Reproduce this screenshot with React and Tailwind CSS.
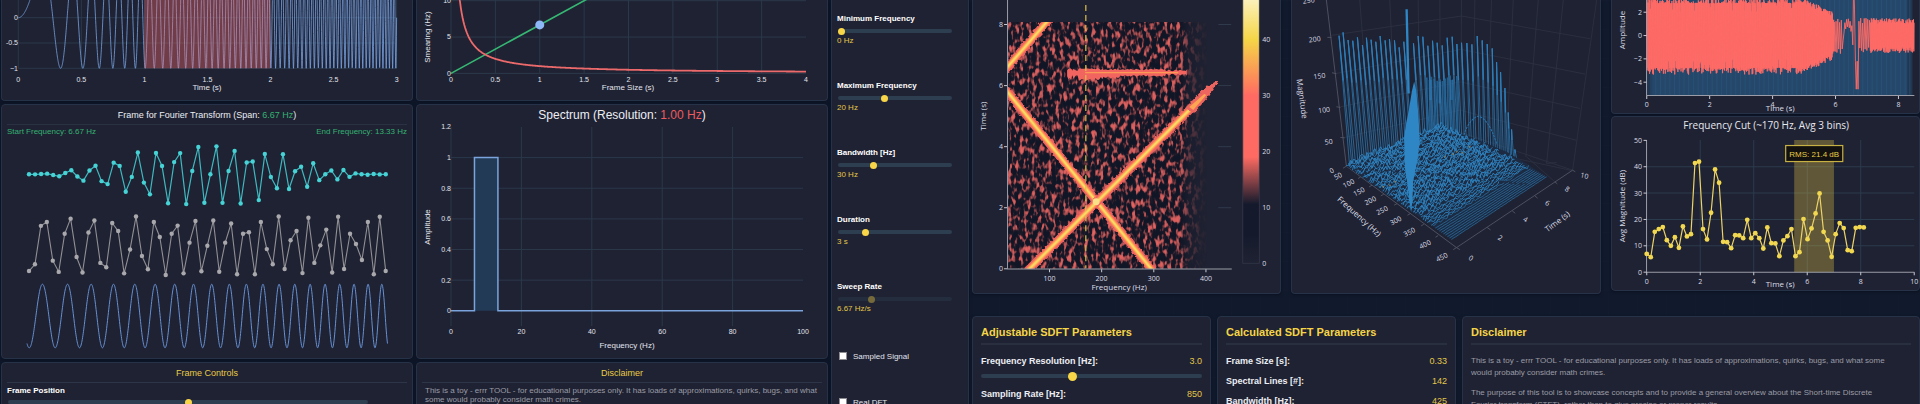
import React from 'react';

const TAU = Math.PI * 2;

function makeRandom(seed) {
  let s = seed;
  return () => {
    s = (s * 1664525 + 1013904223) % 4294967296;
    return s / 4294967296;
  };
}

const toPoints = (pts) => pts.map(([x, y]) => `${x.toFixed(2)},${y.toFixed(2)}`).join(' ');
const chirp = (t) => Math.sin(TAU * (20 / 3) * t * t);

const ARIAL = "font-['Liberation_Sans',Arial,sans-serif]";
const OPEN = "font-['Open_Sans','Noto_Sans',sans-serif]";

function Panel({ className = '', children }) {
  return (
    <section className={`border border-[#263247] bg-[#1f2232] shadow-[0_1px_3px_#0a1120] ${className}`}>
      {children}
    </section>
  );
}

/* ---------- Left page charts ---------- */

function SignalChart() {
  const px = (t) => 18.3 + 126.1 * t;
  const py = (v) => 17.7 - 50.6 * v;
  const pts = [];
  for (let t = 0; t <= 3.0001; t += 0.0015) pts.push([px(t), py(chirp(t))]);
  return (
    <svg viewBox="2 0 410 100" className={`block h-auto w-full ${ARIAL}`} role="img" aria-label="Signal over time">
      <g stroke="#2f4255" strokeWidth="1" opacity="0.7">
        {[0, -0.5, -1].map((v) => (
          <line key={v} x1={px(0)} x2={px(3)} y1={py(v)} y2={py(v)} />
        ))}
        {[0, 0.5, 1, 1.5, 2, 2.5, 3].map((t) => (
          <line key={t} x1={px(t)} x2={px(t)} y1="0" y2={py(-1)} />
        ))}
      </g>
      <polyline points={toPoints(pts)} fill="none" stroke="#7aa7e8" strokeWidth="0.9" opacity="0.85" />
      <rect x={px(1)} y="0" width={px(2) - px(1)} height={py(-1)} fill="#ff6b6b" opacity="0.36" />
      <g fill="#e2e4ee" fontSize="7" textAnchor="end">
        <text x="18" y="20">0</text>
        <text x="18" y="45">-0.5</text>
        <text x="18" y="71">−1</text>
      </g>
      <g fill="#e2e4ee" fontSize="7" textAnchor="middle">
        {[0, 0.5, 1, 1.5, 2, 2.5, 3].map((t) => (
          <text key={t} x={px(t)} y="82">{t}</text>
        ))}
        <text x="207" y="90" fontSize="8">Time (s)</text>
      </g>
    </svg>
  );
}

function FrameChart() {
  const windowed = [];
  const sampled = [];
  const wave = [];
  for (let n = 0; n < 60; n++) {
    const w = Math.sin((Math.PI * n) / 59) ** 2;
    windowed.push([29 + 6.047 * n, 174.3 - 32.7 * w * chirp(1 + n / 60)]);
  }
  for (let n = 0; n <= 60; n++) sampled.push([29 + 5.945 * n, 245.7 - 29.3 * chirp(1 + n / 60)]);
  for (let i = 0; i <= 1200; i++) wave.push([27 + 0.3004 * i, 316 - 31.8 * chirp(1 + i / 1200)]);
  return (
    <svg viewBox="2 138 410 220" className="block h-auto w-full" role="img" aria-label="Windowed, sampled and continuous frame">
      <polyline points={toPoints(windowed)} fill="none" stroke="#3fb9c0" strokeWidth="1.2" />
      {windowed.map(([x, y], i) => <circle key={i} cx={x} cy={y} r="2.2" fill="#46d3d6" />)}
      <polyline points={toPoints(sampled)} fill="none" stroke="#909094" strokeWidth="1.1" />
      {sampled.map(([x, y], i) => <circle key={i} cx={x} cy={y} r="2.2" fill="#a9a9ad" />)}
      <polyline points={toPoints(wave)} fill="none" stroke="#6690d4" strokeWidth="1" />
    </svg>
  );
}

function SmearingChart() {
  const px = (v) => 451 + 88.75 * v;
  const py = (v) => 73.4 - 7.27 * v;
  const curve = [];
  for (let v = 0.08; v <= 4; v += 0.01) curve.push([px(v), py(1 / v)]);
  const ticks = [0, 0.5, 1, 1.5, 2, 2.5, 3, 3.5, 4];
  return (
    <svg viewBox="417 0 410 100" className={`block h-auto w-full ${ARIAL}`} role="img" aria-label="Smearing against frame size">
      <g stroke="#2f4255" strokeWidth="1" opacity="0.7">
        {[0, 5, 10].map((v) => <line key={v} x1={px(0)} x2={px(4)} y1={py(v)} y2={py(v)} />)}
        {ticks.slice(0, 8).map((v) => <line key={v} x1={px(v)} x2={px(v)} y1="0" y2={py(0)} />)}
      </g>
      <line x1={px(0)} y1={py(0)} x2={px(1.6)} y2={py(10.667)} stroke="#36b874" strokeWidth="1.6" />
      <polyline points={toPoints(curve)} fill="none" stroke="#ec6a6b" strokeWidth="1.8" />
      <circle cx={px(1)} cy={py(6.667)} r="4.5" fill="#8cb8f8" />
      <g fill="#e2e4ee" fontSize="7" textAnchor="end">
        <text x="451" y="3">10</text>
        <text x="451" y="39">5</text>
        <text x="451" y="76">0</text>
      </g>
      <g fill="#e2e4ee" fontSize="7" textAnchor="middle">
        {ticks.map((v) => <text key={v} x={px(v)} y="82">{v}</text>)}
        <text x="628" y="90" fontSize="8">Frame Size (s)</text>
        <text transform="translate(430 37) rotate(-90)" fontSize="8">Smearing (Hz)</text>
      </g>
    </svg>
  );
}

function SpectrumChart() {
  const px = (v) => 451 + 3.52 * v;
  const py = (v) => 310.8 - 153.2 * v;
  return (
    <svg viewBox="417 122 410 236" className={`block h-auto w-full ${ARIAL}`} role="img" aria-label="Spectrum">
      <g stroke="#2f4255" strokeWidth="1" opacity="0.7">
        {[0.2, 0.4, 0.6, 0.8, 1].map((v) => <line key={v} x1={px(0)} x2={px(100)} y1={py(v)} y2={py(v)} />)}
        {[0, 20, 40, 60, 80].map((v) => <line key={v} x1={px(v)} x2={px(v)} y1="127" y2="326" />)}
      </g>
      <rect x={px(6.667)} y={py(1)} width={px(6.667) - px(0)} height={py(0) - py(1)} fill="#223a56" />
      <polyline
        points={toPoints([[px(0), py(0)], [px(6.667), py(0)], [px(6.667), py(1)], [px(13.33), py(1)], [px(13.33), py(0)], [px(100), py(0)]])}
        fill="none"
        stroke="#7ba3dc"
        strokeWidth="1.5"
      />
      <g fill="#e2e4ee" fontSize="7" textAnchor="end">
        {[0, 0.2, 0.4, 0.6, 0.8, 1, 1.2].map((v) => <text key={v} x="451" y={py(v) + 2.5}>{v}</text>)}
      </g>
      <g fill="#e2e4ee" fontSize="7" textAnchor="middle">
        {[0, 20, 40, 60, 80, 100].map((v) => <text key={v} x={px(v)} y="334">{v}</text>)}
        <text x="627" y="348" fontSize="8">Frequency (Hz)</text>
        <text transform="translate(430 227) rotate(-90)" fontSize="8">Amplitude</text>
      </g>
    </svg>
  );
}

/* ---------- Right page charts ---------- */

function Sweep({ from, to }) {
  const line = { x1: from[0], y1: from[1], x2: to[0], y2: to[1] };
  return (
    <g>
      <line {...line} stroke="#ee6460" strokeWidth="8.6" filter="url(#ragged)" />
      <line {...line} stroke="#ff7d5c" strokeWidth="5.6" />
      <line {...line} stroke="#fba452" strokeWidth="4" />
      <line {...line} stroke="#f8cf5a" strokeWidth="2.4" />
      <line {...line} stroke="#fae07c" strokeWidth="0.8" />
    </g>
  );
}

function Spectrogram() {
  const fx = (f) => 997.3 + 0.521 * f;
  const ty = (t) => 268.5 - 30.5 * t;
  const rnd = makeRandom(7);
  const top = [];
  const bottom = [];
  for (let x = 1067; x <= 1187; x += 1.3) {
    const wide = x < 1078 ? 1.5 + rnd() * 3 : x < 1100 ? 3.4 + rnd() * 1.5 : x > 1165 ? 1 + rnd() * 2.4 : 2.4 + rnd() * 1.8;
    top.push([x, 72 - wide * 0.8]);
    bottom.unshift([x, 72.5 + wide * (x < 1120 ? 1.6 : 1)]);
  }
  return (
    <svg viewBox="973 0 307 293" className={`block h-auto w-full ${OPEN}`} role="img" aria-label="Spectrogram">
      <defs>
        <filter id="speckle" x="0" y="0" width="1" height="1" colorInterpolationFilters="sRGB">
          <feTurbulence type="fractalNoise" baseFrequency="0.25 0.13" numOctaves="2" seed="12" />
          <feColorMatrix values="1 0 0 0 0  1 0 0 0 0  1 0 0 0 0  0 0 0 0 1" />
          <feComponentTransfer>
            <feFuncR type="table" tableValues="0.07 0.07 0.07 0.07 0.07 0.12 0.52 0.8 0.88 0.92 1" />
            <feFuncG type="table" tableValues="0.09 0.09 0.09 0.09 0.09 0.1 0.25 0.36 0.38 0.4 0.42" />
            <feFuncB type="table" tableValues="0.15 0.15 0.15 0.15 0.15 0.16 0.27 0.36 0.37 0.38 0.4" />
          </feComponentTransfer>
        </filter>
        <filter id="ragged" x="-0.1" y="-0.1" width="1.2" height="1.2">
          <feTurbulence type="fractalNoise" baseFrequency="0.35" numOctaves="1" seed="4" result="n" />
          <feDisplacementMap in="SourceGraphic" in2="n" scale="4" xChannelSelector="R" yChannelSelector="G" />
        </filter>
        <linearGradient id="fade" x1="0" x2="1" y1="0" y2="0">
          <stop offset="0" stopColor="#fff" />
          <stop offset="0.82" stopColor="#fff" />
          <stop offset="0.86" stopColor="#666" />
          <stop offset="0.91" stopColor="#222" />
          <stop offset="0.95" stopColor="#000" />
        </linearGradient>
        <mask id="fadeMask" maskUnits="userSpaceOnUse" x="1007" y="22" width="212" height="247">
          <rect x="1007.7" y="22" width="210" height="246.5" fill="url(#fade)" />
        </mask>
        <clipPath id="heat"><rect x="1007.7" y="22" width="211" height="246.5" /></clipPath>
        <linearGradient id="scale" x1="0" x2="0" y1="-16" y2="262.5" gradientUnits="userSpaceOnUse">
          <stop offset="0" stopColor="#fffbe8" />
          <stop offset="0.2" stopColor="#f5d547" />
          <stop offset="0.4" stopColor="#ff6b62" />
          <stop offset="0.62" stopColor="#ff6b62" />
          <stop offset="0.79" stopColor="#141a2c" />
          <stop offset="0.9" stopColor="#141a2c" />
          <stop offset="1" stopColor="#1f2232" />
        </linearGradient>
      </defs>
      <g stroke="#2f3a4c" strokeWidth="1">
        {[2, 4, 6, 8].map((t) => <line key={t} x1="1218" x2="1231" y1={ty(t)} y2={ty(t)} />)}
      </g>
      <g mask="url(#fadeMask)">
        <rect x="1007.7" y="22" width="210" height="246.5" filter="url(#speckle)" />
      </g>
      <g clipPath="url(#heat)">
        <Sweep from={[1004, 87.5]} to={[1153, 271]} />
        <Sweep from={[1003, 72]} to={[1051, 17]} />
        <Sweep from={[1027, 271]} to={[1192, 107]} />
        <polygon points="1186,107 1193,114 1206,99 1218,81 1216,81 1202,90" fill="#ee6560" filter="url(#ragged)" />
        <polygon points="1189,107 1193,110 1206,95 1204,94" fill="#fba452" />
        <polygon points={toPoints([...top, ...bottom])} fill="#f2645f" />
        <line x1="1085" x2="1178" y1="72.5" y2="72.5" stroke="#fa9a55" strokeWidth="1.2" />
        <circle cx="1096" cy="201.5" r="3.4" fill="#fbe08a" />
      </g>
      <line x1="1085.7" x2="1085.7" y1="5" y2="268" stroke="#d9c04a" strokeWidth="1.2" strokeDasharray="6 4" />
      <path d="M1007.5 0V268.5M1007 268.8H1231.5" stroke="#9a9da8" strokeWidth="1" fill="none" />
      <g stroke="#c9cbd4" strokeWidth="1">
        {[0, 2, 4, 6, 8].map((t) => <line key={t} x1="1004" x2="1007" y1={ty(t)} y2={ty(t)} />)}
        {[100, 200, 300, 400].map((f) => <line key={f} x1={fx(f)} x2={fx(f)} y1="269" y2="272" />)}
      </g>
      <rect x="1242.5" y="-16" width="16.5" height="279" fill="url(#scale)" stroke="#333849" strokeWidth="0.8" />
      <g fill="#dcdee8" fontSize="7">
        {[0, 10, 20, 30, 40].map((v) => <text key={v} x="1262" y={265.5 - 5.58 * v}>{v}</text>)}
      </g>
      <g fill="#dcdee8" fontSize="7" textAnchor="end">
        {[0, 2, 4, 6, 8].map((t) => <text key={t} x="1003" y={ty(t) + 2.5}>{t}</text>)}
      </g>
      <g fill="#dcdee8" fontSize="7" textAnchor="middle">
        {[100, 200, 300, 400].map((f) => <text key={f} x={fx(f)} y="281">{f}</text>)}
        <text x="1119" y="290" fontSize="8">Frequency (Hz)</text>
        <text transform="translate(986 116) rotate(-90)" fontSize="8">Time (s)</text>
      </g>
    </svg>
  );
}

const TIP_X = [178, 190, 205, 219, 233, 248, 260, 274, 288, 301, 316, 329, 344, 358, 372, 401, 415, 429, 444, 458, 472, 487, 502, 517, 531, 545, 561, 576, 592, 607, 622, 637, 650, 662, 675, 685, 695, 705];
const TIP_Y = [107, 97, 120, 122, 112, 135, 113, 119, 125, 108, 121, 117, 121, 142, 125, 130, 108, 110, 137, 122, 128, 136, 113, 110, 132, 128, 129, 133, 108, 121, 132, 145, 186, 216, 264, 337, 388, 448];
const BURST = [[441, 232], [449, 240], [455, 230], [463, 236], [472, 242], [481, 238], [488, 243], [496, 235], [503, 232], [511, 226], [519, 238], [531, 228]];
const FREQ_LABELS = [[0, 156, 511], [50, 175, 527], [100, 207, 549], [150, 238, 574], [200, 272, 601], [250, 307, 630], [300, 348, 661], [350, 389, 695], [400, 436, 732], [450, 486, 770]];
const TIME_LABELS = [[0, 574, 773], [2, 661, 712], [4, 737, 657], [6, 803, 608], [8, 862, 566], [10, 916, 527]];
const MAG_LABELS = [[50, 148, 425], [100, 134, 330], [150, 120, 228], [200, 106, 118], [250, 88, 2]];

function Waterfall() {
  const rnd = makeRandom(31);
  const floor = [];
  const rows = 52;
  for (let i = 0; i <= rows; i++) {
    const f = i / rows;
    const start = [200 + 315 * f, 498 + 220 * f];
    const end = [487 + 313 * f, 380 + 150 * f];
    const amp = f < 0.7 ? 17 : f < 0.84 ? 9 : 1;
    const line = [];
    for (let k = 0; k <= 70; k++) {
      const u = k / 70;
      const lift = rnd() ** 1.6 * amp;
      line.push([start[0] + (end[0] - start[0]) * u, start[1] + (end[1] - start[1]) * u - lift]);
    }
    floor.push(line);
  }
  return (
    <svg viewBox="37 0 921 879" className={`block h-auto w-full ${OPEN}`} role="img" aria-label="Three dimensional spectrogram">
      <g stroke="#2d3142" strokeWidth="2.5" fill="none">
        <path d="M155 106L545 48L930 116M170 220L543 148L915 222M182 320L540 245L900 325M195 412L540 330L888 420" />
        <path d="M240 0L275 450M330 0L350 420M415 0L420 400M480 0L482 390M545 0L543 370M585 0L580 385M635 0L622 410M700 0L680 440M775 0L738 470M850 0L800 490M950 0L878 510" />
        <path d="M200 498L487 378L878 510" />
        <path d="M708 475L880 512M740 470L825 545M800 490L830 487" />
      </g>
      <g stroke="#55596a" strokeWidth="2.5" fill="none">
        <path d="M140 0L200 498L530 742L878 510" />
        <path d="M143 112H155M157 218L170 221M170 320L182 322M182 412L195 413M200 498L190 504M530 742L520 748M530 742L540 748M622 682L632 689M697 632L706 639M765 587L773 594M825 545L832 551M878 510L886 515M475 706L467 711M432 672L424 677M392 640L383 645M352 610L343 615M312 582L303 587M277 555L268 560M243 530L235 535" />
      </g>
      <g fill="none">
        {TIP_X.map((x, i) => {
          const bx = 213 + ((x - 178) / 527) * 495;
          const by = x < 480 ? 490 - (x - 178) * 0.2 : 430 + (x - 480) * 0.22;
          return (
            <g key={i}>
              <path d={`M${bx - 4} ${by}L${x} ${TIP_Y[i]}L${bx + 3} ${by}`} stroke="#2a74ab" strokeWidth="2.4" />
              <path d={`M${x} ${TIP_Y[i]}L${x + (bx - x) * 0.35} ${TIP_Y[i] + (by - TIP_Y[i]) * 0.35}`} stroke="#2d80bd" strokeWidth="3.4" />
            </g>
          );
        })}
        {BURST.map(([x, y], i) => (
          <path key={i} d={`M${x} ${y}L${x + 2} 400`} stroke="#27679a" strokeWidth="5" opacity="0.85" />
        ))}
        <path d="M452 240V300M480 245V310M515 240V300" stroke="#2d80bd" strokeWidth="8" opacity="0.5" />
      </g>
      <polygon points="200,498 350,435 420,405 487,378 560,405 680,455 740,490 800,530 740,566 515,718" fill="#1c2b42" />
      <g fill="none" stroke="#2f86c4">
        {floor.map((line, i) => <polyline key={i} points={toPoints(line)} strokeWidth={i > 42 ? 1.8 : 2.6} />)}
      </g>
      <path d="M225 508Q400 510 740 553" stroke="#1d2b42" strokeWidth="6" strokeDasharray="9 7 5 10" fill="none" />
      <path d="M552 405Q565 362 593 348Q625 352 650 430" stroke="#2b76ae" strokeWidth="3" strokeDasharray="7 3" fill="none" />
      <g fill="#2f86c4">
        <path d="M377 28L384 28L390 280L383 280Z" />
        <path d="M378 612L384 560L375 500L373 410L380 365L388 325L396 275L403 244L409 270L416 345L420 425L412 485L400 545L398 600L394 636L388 600L386 570Z" />
      </g>
      <g fill="#c79a4a" opacity="0.5">
        {[[330, 555], [345, 545], [520, 462], [530, 455], [547, 458], [495, 470], [310, 560], [570, 440]].map(([x, y], i) => (
          <circle key={i} cx={x} cy={y} r="3" />
        ))}
      </g>
      <g fill="#dcdee8" fontSize="21" textAnchor="middle">
        {MAG_LABELS.map(([v, x, y]) => <text key={v} transform={`translate(${x} ${y + 7}) rotate(-8)`}>{v}</text>)}
        {FREQ_LABELS.map(([v, x, y]) => <text key={v} transform={`translate(${x + 3} ${y + 7}) rotate(-26)`}>{v}</text>)}
        {TIME_LABELS.map(([v, x, y]) => <text key={v} transform={`translate(${x - 4} ${y + 7}) rotate(${v === 10 ? 12 : 30})`}>{v}</text>)}
        <text transform="translate(233 655) rotate(42)" fontSize="24">Frequency (Hz)</text>
        <text transform="translate(837 671) rotate(-37)" fontSize="24">Time (s)</text>
        <text transform="translate(59 297) rotate(82)" fontSize="24">Magnitude</text>
      </g>
    </svg>
  );
}

function WaveChart() {
  const rnd = makeRandom(99);
  const px = (t) => 1646.7 + 31.43 * t;
  const py = (v) => 35.5 - 11.65 * v;
  const pts = [];
  let sign = 1;
  for (let t = 0; t <= 8.5; t += t > 5.95 && t < 7.1 ? 0.028 : 0.01) {
    let amp = 2.75 + rnd() ** 2 * 0.6;
    let mid = 0;
    if (rnd() < 0.06) amp -= 0.7;
    if (t > 4.9) amp = 2.8 - (t - 4.9) * 1.2 + rnd() * 0.5;
    if (t > 5.9) amp = 1.1 + rnd() * 0.5;
    if (t > 6.2 && t < 6.52) {
      mid = t < 6.26 ? -0.8 : 0.5 + Math.sin(((t - 6.26) / 0.26) * Math.PI) * 0.6;
      amp = 0.35;
    }
    if (t >= 6.52 && t < 6.72) {
      mid = t < 6.56 ? 0 : t < 6.63 ? 3.4 : -3.4;
      amp = t < 6.56 ? 0.8 : 1.2;
    }
    if (t >= 6.72) amp = 1 + rnd() * 0.5;
    pts.push([px(t), py(mid + sign * amp)]);
    sign = -sign;
  }
  const stripes = [];
  for (let x = 1651; x < 1912; x += 4.7) stripes.push(x);
  return (
    <svg viewBox="1612 0 307 113" className={`block h-auto w-full ${OPEN}`} role="img" aria-label="Amplitude over time">
      <rect x="1647" y="0" width="265" height="95.5" fill="#24476a" />
      <rect x="1647" y="0" width="5" height="95.5" fill="#1f2232" opacity="0.45" />
      <rect x="1907" y="0" width="5" height="95.5" fill="#1f2232" opacity="0.45" />
      <g stroke="#29567a" strokeWidth="1" opacity="0.7">
        {stripes.map((x) => <line key={x} x1={x} x2={x} y1="0" y2="95.5" />)}
      </g>
      <polyline points={toPoints(pts)} fill="none" stroke="#ff6b66" strokeWidth="0.9" />
      <path d="M1646.5 0V95.5H1914" stroke="#9a9da8" strokeWidth="1" fill="none" />
      <g stroke="#c9cbd4" strokeWidth="1">
        {[2, 0, -2, -4].map((v) => <line key={v} x1="1643.5" x2="1646.5" y1={py(v)} y2={py(v)} />)}
        {[0, 2, 4, 6, 8].map((t) => <line key={t} x1={px(t)} x2={px(t)} y1="96" y2="99" />)}
      </g>
      <g fill="#dcdee8" fontSize="7" textAnchor="end">
        <text x="1642" y="15">2</text>
        <text x="1642" y="38">0</text>
        <text x="1642" y="61">−2</text>
        <text x="1642" y="85">−4</text>
      </g>
      <g fill="#dcdee8" fontSize="7" textAnchor="middle">
        {[0, 2, 4, 6, 8].map((t) => <text key={t} x={px(t)} y="107">{t}</text>)}
        <text x="1780" y="111" fontSize="8">Time (s)</text>
        <text transform="translate(1625 30) rotate(-90)" fontSize="8">Amplitude</text>
      </g>
    </svg>
  );
}

const CUT = [764, 774, 698, 690, 684, 723, 740, 714, 746, 682, 712, 705, 492, 488, 690, 721, 641, 511, 551, 728, 729, 747, 708, 709, 717, 662, 717, 702, 717, 748, 685, 732, 733, 771, 724, 711, 690, 771, 759, 660, 720, 688, 643, 583, 698, 724, 773, 705, 672, 687, 753, 756, 686, 684, 685];

function CutChart() {
  const px = (t) => 1646.7 + 26.72 * t;
  const py = (v) => 273 - 2.633 * v;
  const pts = CUT.map((y, i) => [1646.7 + 4.015 * i, y / 3]);
  return (
    <svg viewBox="1612 118 307 173" className={`block h-auto w-full ${OPEN}`} role="img" aria-label="Frequency cut">
      <text x="1766" y="130" fontSize="10" textAnchor="middle" fill="#e6e8f0">Frequency Cut (~170 Hz, Avg 3 bins)</text>
      <g stroke="#2f4255" strokeWidth="1" opacity="0.8">
        {[10, 20, 30, 40].map((v) => <line key={v} x1={px(0)} x2={px(10)} y1={py(v)} y2={py(v)} />)}
        {[2, 4, 6, 8].map((t) => <line key={t} x1={px(t)} x2={px(t)} y1="141" y2="273" />)}
      </g>
      <rect x="1794" y="141" width="39.7" height="132" fill="#f5d547" opacity="0.3" />
      <path d="M1646.5 141V273H1914" stroke="#9a9da8" strokeWidth="1" fill="none" />
      <g stroke="#c9cbd4" strokeWidth="1">
        {[0, 10, 20, 30, 40, 50].map((v) => <line key={v} x1="1643.5" x2="1646.5" y1={py(v)} y2={py(v)} />)}
        {[0, 2, 4, 6, 8, 10].map((t) => <line key={t} x1={px(t)} x2={px(t)} y1="273" y2="276" />)}
      </g>
      <polyline points={toPoints(pts)} fill="none" stroke="#ecd267" strokeWidth="1.2" />
      {pts.map(([x, y], i) => <circle key={i} cx={x} cy={y} r="2.4" fill="#f2d750" />)}
      <rect x="1785.5" y="146.5" width="57" height="16" fill="#12110f" stroke="#c8b144" strokeWidth="1.2" />
      <text x="1814" y="158" fontSize="8" textAnchor="middle" fill="#e8cc45" className={ARIAL}>RMS: 21.4 dB</text>
      <g fill="#dcdee8" fontSize="7" textAnchor="end">
        {[0, 10, 20, 30, 40, 50].map((v) => <text key={v} x="1642" y={py(v) + 2.5}>{v}</text>)}
      </g>
      <g fill="#dcdee8" fontSize="7" textAnchor="middle">
        {[0, 2, 4, 6, 8, 10].map((t) => <text key={t} x={px(t)} y="285">{t}</text>)}
        <text x="1780" y="288" fontSize="8">Time (s)</text>
        <text transform="translate(1625 207) rotate(-90)" fontSize="8">Avg Magnitude (dB)</text>
      </g>
    </svg>
  );
}

/* ---------- Controls ---------- */

const RANGE =
  'block h-1 appearance-none rounded-full bg-[#2d3e50] disabled:opacity-40 [&::-webkit-slider-thumb]:appearance-none [&::-webkit-slider-thumb]:rounded-full [&::-webkit-slider-thumb]:bg-[#f8d648]';
const SMALL_THUMB = '[&::-webkit-slider-thumb]:size-[7px]';
const LARGE_THUMB = '[&::-webkit-slider-thumb]:size-[9px]';

const SETTINGS = [
  { id: 'fmin', label: 'Minimum Frequency', pos: 0, value: '0 Hz' },
  { id: 'fmax', label: 'Maximum Frequency', pos: 40, value: '20 Hz' },
  { id: 'band', label: 'Bandwidth [Hz]', pos: 30, value: '30 Hz' },
  { id: 'dur', label: 'Duration', pos: 22, value: '3 s' },
  { id: 'rate', label: 'Sweep Rate', pos: 28, value: '6.67 Hz/s', disabled: true },
];

function Setting({ id, label, pos, value, disabled }) {
  return (
    <div className="flex h-[67px] flex-col">
      <label htmlFor={id} className="text-[8px] leading-[10px] font-bold text-white">{label}</label>
      <input id={id} type="range" min="0" max="100" defaultValue={pos} disabled={disabled} className={`mt-[5px] ml-px w-[114px] ${RANGE} ${SMALL_THUMB}`} />
      <output htmlFor={id} className="mt-[3px] text-[8px] leading-[10px] text-[#e3c64a]">{value}</output>
    </div>
  );
}

function Check({ id, label }) {
  return (
    <div className="flex h-[46px] items-start gap-[6px] pl-0.5">
      <input id={id} type="checkbox" className="size-2 appearance-none border border-[#8b8b90] bg-white checked:bg-[#f8d648]" />
      <label htmlFor={id} className="text-[8px] leading-[10px] text-[#e2e4ee]">{label}</label>
    </div>
  );
}

function BigRange({ id, label, pos, value }) {
  return (
    <div className="mb-2.5">
      <div className="flex justify-between text-[9px] leading-3">
        <label htmlFor={id} className="font-bold text-[#eceef4]">{label}</label>
        <output htmlFor={id} className="text-[#e3c64a]">{value}</output>
      </div>
      <input id={id} type="range" min="0" max="100" defaultValue={pos} className={`mt-[7px] w-full ${RANGE} ${LARGE_THUMB}`} />
    </div>
  );
}

function InfoPanel({ title, children }) {
  return (
    <Panel className="rounded-sm px-2 pt-2 pb-3">
      <h2 className="border-b-2 border-[#2a2f40] pb-1 text-[11px] leading-[14px] font-bold text-[#f5d547]">{title}</h2>
      <div className="pt-2.5">{children}</div>
    </Panel>
  );
}

function PlainHeading({ children }) {
  return (
    <h2 className="mx-[5px] border-b border-[#2c3648] pt-1 pb-[3px] text-center text-[9px] leading-3 text-[#e8cc48]">{children}</h2>
  );
}

const RESULTS = [
  ['Frame Size [s]:', '0.33'],
  ['Spectral Lines [#]:', '142'],
  ['Bandwidth [Hz]:', '425'],
];

export default function App() {
  return (
    <main className={`grid h-screen grid-cols-[970fr_950fr] items-start overflow-hidden bg-[#111a2c] ${ARIAL}`}>
      <div className="grid grid-cols-[1fr_1fr_138px] gap-[3px] bg-[#0f1829] px-px">
        <div className="flex flex-col gap-[3px]">
          <Panel className="rounded-b-sm border-t-0"><SignalChart /></Panel>
          <Panel className="rounded-sm">
            <h2 className="mx-[5px] border-b border-[#2a3142] pt-1 pb-[3px] text-center text-[9px] leading-3 text-[#eceef4]">
              Frame for Fourier Transform (Span: <span className="text-[#34b273]">6.67 Hz</span>)
            </h2>
            <div className="mx-[5px] flex justify-between pt-px text-[8px] leading-3 text-[#34b273]">
              <span>Start Frequency: 6.67 Hz</span>
              <span>End Frequency: 13.33 Hz</span>
            </div>
            <FrameChart />
          </Panel>
          <Panel className="rounded-t-sm">
            <PlainHeading>Frame Controls</PlainHeading>
            <div className="px-[5px] pt-[3px] pb-4">
              <label htmlFor="frame" className="block text-[8px] leading-[10px] font-bold text-white">Frame Position</label>
              <input id="frame" type="range" min="0" max="100" defaultValue="50" className={`mt-1 ml-px w-[90%] ${RANGE} ${SMALL_THUMB}`} />
            </div>
          </Panel>
        </div>

        <div className="flex flex-col gap-[3px]">
          <Panel className="rounded-b-sm border-t-0"><SmearingChart /></Panel>
          <Panel className="rounded-sm">
            <h2 className="pt-[3px] text-center text-[12px] leading-[14px] text-[#eceef4]">
              Spectrum (Resolution: <span className="text-[#ef5a5f]">1.00 Hz</span>)
            </h2>
            <SpectrumChart />
          </Panel>
          <Panel className="rounded-t-sm">
            <PlainHeading>Disclaimer</PlainHeading>
            <p className="px-2 pt-[3px] pb-4 text-[8px] leading-[9px] text-[#9b9ca6]">
              This is a toy - errr TOOL - for educational purposes only. It has loads of approximations, quirks, bugs, and what
              some would probably consider math crimes.
            </p>
          </Panel>
        </div>

        <Panel className="border-y-0 pt-3.5 pl-[5px]">
          {SETTINGS.map((s) => <Setting key={s.id} {...s} />)}
          <div className="pt-[3px]">
            <Check id="sampled" label="Sampled Signal" />
            <Check id="realdft" label="Real DFT" />
          </div>
        </Panel>
      </div>

      <div className="bg-[linear-gradient(to_right,#15203340_1px,transparent_1px),linear-gradient(to_bottom,#15203340_1px,transparent_1px)] bg-[size:29px_29px] pl-0.5">
        <div className="grid grid-cols-3 items-start gap-2.5">
          <Panel className="rounded-b-sm border-t-0"><Spectrogram /></Panel>
          <Panel className="rounded-b-sm border-t-0"><Waterfall /></Panel>
          <div className="flex flex-col gap-0.5">
            <Panel className="rounded-b-sm border-t-0"><WaveChart /></Panel>
            <Panel className="rounded-sm"><CutChart /></Panel>
          </div>
        </div>

        <div className="mt-[22px] grid grid-cols-[239fr_239fr_458fr] gap-1.5">
          <InfoPanel title="Adjustable SDFT Parameters">
            <BigRange id="res" label="Frequency Resolution [Hz]:" pos={41} value="3.0" />
            <BigRange id="sr" label="Sampling Rate [Hz]:" pos={60} value="850" />
          </InfoPanel>
          <InfoPanel title="Calculated SDFT Parameters">
            <dl className="flex flex-col gap-2 text-[9px] leading-3">
              {RESULTS.map(([name, value]) => (
                <div key={name} className="flex justify-between">
                  <dt className="font-bold text-[#eceef4]">{name}</dt>
                  <dd className="text-[#e3c64a]">{value}</dd>
                </div>
              ))}
            </dl>
          </InfoPanel>
          <InfoPanel title="Disclaimer">
            <div className="flex flex-col gap-2 pr-4 text-[8px] leading-3 text-[#9b9ca6]">
              <p>
                This is a toy - errr TOOL - for educational purposes only. It has loads of approximations, quirks, bugs, and what some
                would probably consider math crimes.
              </p>
              <p>
                The purpose of this tool is to showcase concepts and to provide a general overview about the Short-time Discrete
                Fourier transform (STFT), rather than to give precise or proper results.
              </p>
            </div>
          </InfoPanel>
        </div>
      </div>
    </main>
  );
}
